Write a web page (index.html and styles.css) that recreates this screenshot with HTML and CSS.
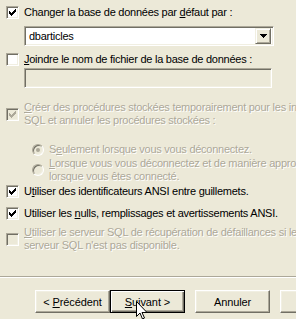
FILE: index.html
```html
<!DOCTYPE html>
<html lang="fr">
  <head>
    <meta charset="UTF-8" />
    <title>Options de connexion</title>
    <link rel="stylesheet" href="styles.css">
  </head>

  <body>
    <div class="dialog">
      <!-- base par defaut -->
      <div class="opt r1">
        <span class="cb"><svg class="tick" width="7" height="7" viewBox="0 0 7 7"><path d="M6 0h1v1h-1zM5 1h2v1h-2zM0 2h1v1h-1zM4 2h3v1h-3zM0 3h2v1h-2zM3 3h3v1h-3zM0 4h5v1h-5zM1 5h3v1h-3zM2 6h1v1h-1z"/></svg></span>
        <span class="label">Changer la base de données par <u>d</u>éfaut par :</span>
      </div>
      <div class="combo">
        <span class="combo-text">dbarticles</span>
        <span class="combo-btn"><svg width="7" height="4" viewBox="0 0 7 4"><path d="M0 0h7v1h-7zM1 1h5v1h-5zM2 2h3v1h-3zM3 3h1v1h-1z"/></svg></span>
      </div>

      <!-- nom de fichier -->
      <div class="opt r2">
        <span class="cb"></span>
        <span class="label"><u>J</u>oindre le nom de fichier de la base de données :</span>
      </div>
      <div class="edit"></div>

      <!-- procedures stockees -->
      <div class="opt r3 disabled">
        <span class="cb"><svg class="tick" width="7" height="7" viewBox="0 0 7 7"><path d="M6 0h1v1h-1zM5 1h2v1h-2zM0 2h1v1h-1zM4 2h3v1h-3zM0 3h2v1h-2zM3 3h3v1h-3zM0 4h5v1h-5zM1 5h3v1h-3zM2 6h1v1h-1z"/></svg></span>
        <span class="label"><u>C</u>réer des procédures stockées temporairement pour les instructions<br>SQL et annuler les procédures stockées :</span>
      </div>
      <div class="opt radio-row rd1 disabled">
        <span class="radio on"></span>
        <span class="label">S<u>e</u>ulement lorsque vous vous déconnectez.</span>
      </div>
      <div class="opt radio-row rd2 disabled">
        <span class="radio"></span>
        <span class="label"><u>L</u>orsque vous vous déconnectez et de manière appropriée<br>lorsque vous êtes connecté.</span>
      </div>

      <!-- ANSI -->
      <div class="opt r4">
        <span class="cb"><svg class="tick" width="7" height="7" viewBox="0 0 7 7"><path d="M6 0h1v1h-1zM5 1h2v1h-2zM0 2h1v1h-1zM4 2h3v1h-3zM0 3h2v1h-2zM3 3h3v1h-3zM0 4h5v1h-5zM1 5h3v1h-3zM2 6h1v1h-1z"/></svg></span>
        <span class="label">U<u>t</u>iliser des identificateurs ANSI entre guillemets.</span>
      </div>
      <div class="opt r5">
        <span class="cb"><svg class="tick" width="7" height="7" viewBox="0 0 7 7"><path d="M6 0h1v1h-1zM5 1h2v1h-2zM0 2h1v1h-1zM4 2h3v1h-3zM0 3h2v1h-2zM3 3h3v1h-3zM0 4h5v1h-5zM1 5h3v1h-3zM2 6h1v1h-1z"/></svg></span>
        <span class="label">Utiliser les <u>n</u>ulls, remplissages et avertissements ANSI.</span>
      </div>
      <div class="opt r6 disabled">
        <span class="cb"></span>
        <span class="label"><u>U</u>tiliser le serveur SQL de récupération de défaillances si le<br>serveur SQL n'est pas disponible.</span>
      </div>

      <div class="separator"></div>

      <div class="buttons">
        <button class="btn back">&lt; <u>P</u>récédent</button>
        <button class="btn default"><u>S</u>uivant &gt;</button>
        <button class="btn cancel">Annuler</button>
        <button class="btn">Aide</button>
      </div>
    </div>

    <!-- pointeur de la souris au-dessus de Suivant -->
    <svg class="cursor" width="12" height="19" viewBox="0 0 12 19">
      <path d="M0.5 0.5v15l3.5-3.5 2.5 6 2-1-2.5-5.5h5z" fill="#fff" stroke="#000" stroke-width="1" stroke-linejoin="miter"/>
    </svg>
  </body>
</html>
```

FILE: styles.css
```css
html,
body {
  margin: 0;
  padding: 0;
  background-color: #ece9d8;
  overflow: hidden;
}

body {
  width: 296px;
  height: 319px;
  position: relative;
  font-family: "Liberation Sans", Arial, sans-serif;
  font-size: 11px;
  letter-spacing: -0.25px;
  color: #000;
}

.dialog {
  width: 420px;
  padding: 6px 0 0 6px;
}

.opt {
  display: flex;
  align-items: center;
  gap: 5px;
  line-height: 13px;
  white-space: nowrap;
}

.r1 {
  margin-top: 0;
}

.r2 {
  margin-top: 7px;
}

.r3 {
  margin-top: 13px;
}

.rd1 {
  margin-top: 16px;
  padding-left: 25px;
}

.rd2 {
  margin-top: 1px;
  padding-left: 25px;
}

.r4 {
  margin-top: 2px;
}

.r5 {
  margin-top: 9px;
}

.r6 {
  margin-top: 6px;
}

u {
  text-decoration: underline;
  text-underline-offset: 1px;
}

/* case a cocher */
.cb {
  flex: none;
  width: 13px;
  height: 13px;
  box-sizing: border-box;
  background: #fff;
  border: 1px solid;
  border-color: #aca899 #fff #fff #aca899;
  box-shadow: inset 1px 1px 0 #716f64, inset -1px -1px 0 #f1efe2;
  position: relative;
}

.tick {
  position: absolute;
  left: 2px;
  top: 2px;
  fill: #000;
}

.radio {
  flex: none;
  width: 12px;
  height: 12px;
  box-sizing: border-box;
  border-radius: 50%;
  border: 1px solid;
  border-color: #aca899 #fff #fff #aca899;
  box-shadow: inset 1px 1px 0 #716f64, inset -1px -1px 0 #f1efe2;
  position: relative;
  margin-left: 1px;
}

.radio.on::after {
  content: "";
  position: absolute;
  left: 3px;
  top: 3px;
  width: 4px;
  height: 4px;
  border-radius: 50%;
  background: #aca899;
}

.disabled .label {
  color: #aca899;
  text-shadow: 1px 1px 0 #fff;
}

.disabled .cb {
  background: #ece9d8;
}

.disabled .tick {
  fill: #aca899;
}

/* liste deroulante */
.combo {
  margin: 7px 0 0 18px;
  width: 250px;
  height: 20px;
  box-sizing: border-box;
  background: #fff;
  border: 1px solid;
  border-color: #aca899 #fff #fff #aca899;
  box-shadow: inset 1px 1px 0 #716f64, inset -1px -1px 0 #f1efe2;
  display: flex;
  align-items: center;
  justify-content: space-between;
  padding: 2px;
}

.combo-text {
  padding-left: 2px;
  line-height: 14px;
}

.combo-btn {
  width: 16px;
  height: 16px;
  box-sizing: border-box;
  background: #ece9d8;
  border: 1px solid;
  border-color: #f1efe2 #716f64 #716f64 #f1efe2;
  box-shadow: inset 1px 1px 0 #fff, inset -1px -1px 0 #aca899;
  display: flex;
  align-items: center;
  justify-content: center;
}

.combo-btn svg {
  fill: #000;
}

.edit {
  margin: 2px 0 0 18px;
  width: 248px;
  height: 20px;
  box-sizing: border-box;
  background: #ece9d8;
  border: 1px solid;
  border-color: #aca899 #fff #fff #aca899;
  box-shadow: inset 1px 1px 0 #716f64, inset -1px -1px 0 #f1efe2;
}

.separator {
  margin: 24px 0 0 -6px;
  height: 1px;
  width: 100%;
  background: #aca899;
  border-bottom: 1px solid #fff;
}

/* boutons */
.buttons {
  display: flex;
  margin-top: 12px;
  padding-left: 29px;
  gap: 10px;
}

.btn {
  flex: none;
  width: 75px;
  height: 23px;
  box-sizing: border-box;
  padding: 0;
  font-family: "Liberation Sans", Arial, sans-serif;
  font-size: 11px;
  letter-spacing: -0.1px;
  color: #000;
  background: #ece9d8;
  border: 1px solid;
  border-color: #fff #716f64 #716f64 #fff;
  box-shadow: inset -1px -1px 0 #aca899, inset 1px 1px 0 #f1efe2;
}

.btn.back {
  margin-right: -10px;
}

.btn.default {
  border-color: #000;
  box-shadow: inset 1px 1px 0 #fff, inset -1px -1px 0 #716f64, inset -2px -2px 0 #aca899;
}

.cursor {
  position: absolute;
  left: 136px;
  top: 301px;
}
```
